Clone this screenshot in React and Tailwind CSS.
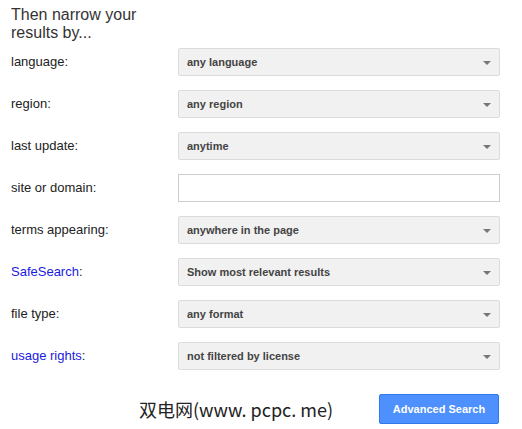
const rows = [
  { label: 'language', value: 'any language' },
  { label: 'region', value: 'any region' },
  { label: 'last update', value: 'anytime' },
  { label: 'site or domain', input: true },
  { label: 'terms appearing', value: 'anywhere in the page' },
  { label: 'SafeSearch', value: 'Show most relevant results', link: true },
  { label: 'file type', value: 'any format' },
  { label: 'usage rights', value: 'not filtered by license', link: true },
];

const Arrow = () => (
  <svg width="8" height="4" viewBox="0 0 8 4" className="absolute right-[8px] top-[12px]">
    <path d="M0 0h8L4 4z" fill="#777" />
  </svg>
);

export default function App() {
  return (
    <div className="w-[522px] h-[429px] bg-white overflow-hidden font-['Liberation_Sans',Arial,sans-serif]">
      <div className="pl-[11px] pt-[6px]">
        <h3 className="text-[16px] leading-[18px] text-[#333] w-[150px]">Then narrow your results by...</h3>

        <div className="mt-[6px] flex flex-col gap-[14px]">
          {rows.map((row) => (
            <div key={row.label} className="flex items-center h-[28px]">
              <div className="w-[167px] text-[13px] text-[#222]">
                <span className={row.link ? 'text-[#1a1ae0]' : ''}>{row.label}</span>:
              </div>
              {row.input ? (
                <div className="w-[322px] h-[28px] bg-white border border-[#ccc]" />
              ) : (
                <div className="relative w-[322px] h-[28px] bg-[#f1f1f1] border border-[#dcdcdc] rounded-[2px] flex items-center pl-[8px] text-[11px] font-bold text-[#444]">
                  {row.value}
                  <Arrow />
                </div>
              )}
            </div>
          ))}
        </div>

        <div className="mt-[24px] flex items-center">
          <div className="w-[128px]" />
          <div className="text-[18px] text-[#222] font-['Noto_Sans_CJK_SC',sans-serif] w-[240px]">
            双电网(www. pcpc. me)
          </div>
          <button className="w-[120px] h-[30px] bg-[#4d90fe] border border-[#3079ed] rounded-[2px] text-white text-[11px] font-bold">
            Advanced Search
          </button>
        </div>
      </div>
    </div>
  );
}
